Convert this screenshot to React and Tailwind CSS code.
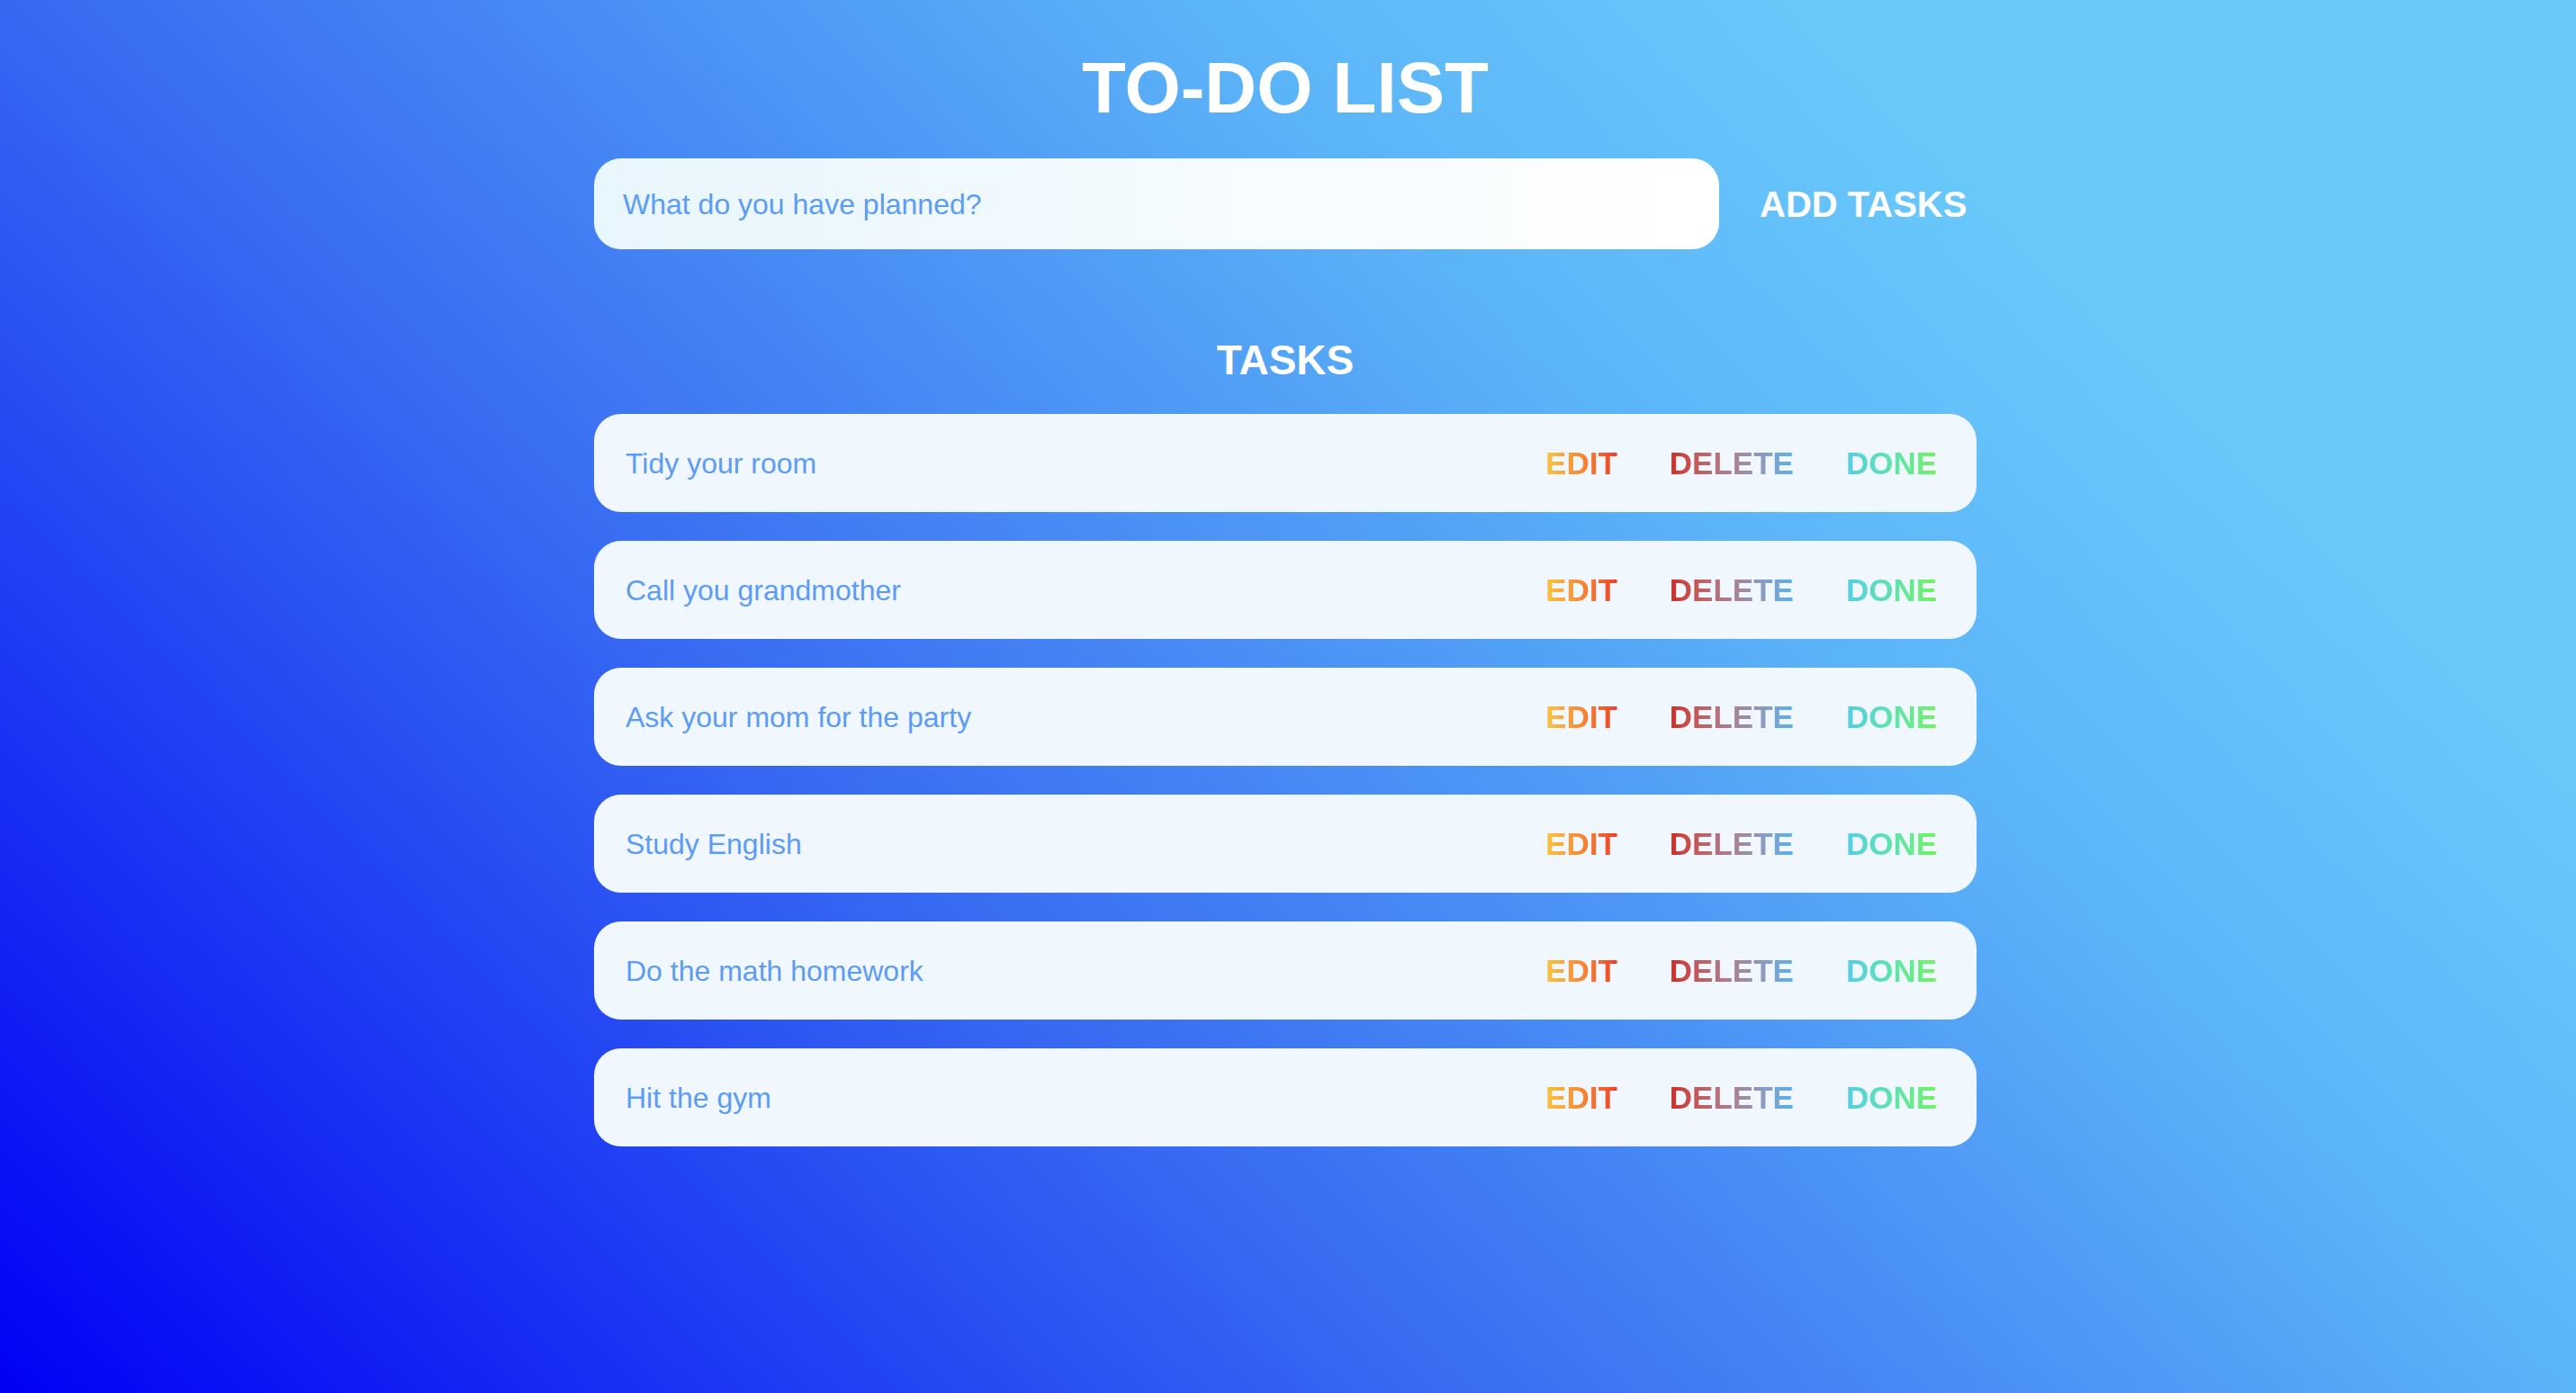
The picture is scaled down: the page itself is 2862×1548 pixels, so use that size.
import React from "react";

const tasks = [
  "Tidy your room",
  "Call you grandmother",
  "Ask your mom for the party",
  "Study English",
  "Do the math homework",
  "Hit the gym",
];

export default function App() {
  return (
    <div
      className="min-h-screen w-full bg-[linear-gradient(45deg,#0000f5_0%,#3668f2_35%,#5cb4f8_65%,#68c8fa_80%,#68c8fa_100%)] font-['Liberation_Sans',Arial,sans-serif]"
    >
      <div className="ml-[660px] flex w-[1536px] flex-col pt-[58px]">
        <h1 className="text-center text-[80px] font-bold leading-none text-white">
          TO-DO LIST
        </h1>
        <div className="mt-[38px] flex items-center">
          <div className="flex h-[101px] w-[1250px] items-center rounded-[30px] bg-linear-to-r from-[#e8f6fd] to-white pl-[32px]">
            <span className="text-[32px] leading-none text-[#5c9cf4]">
              What do you have planned?
            </span>
          </div>
          <button className="ml-[45px] text-[40px] font-bold leading-none text-white">
            ADD TASKS
          </button>
        </div>
        <h2 className="mt-[100px] text-center text-[46px] font-bold leading-none text-white">
          TASKS
        </h2>
        <div className="mt-[37px] flex flex-col gap-[32px]">
          {tasks.map((t) => (
            <div
              key={t}
              className="flex h-[109px] items-center justify-between rounded-[30px] bg-[#f0f7fe] pl-[35px] pr-[44px]"
            >
              <span className="text-[32px] leading-none text-[#5c9cf4]">{t}</span>
              <div className="flex items-center gap-[58px] text-[35px] font-bold leading-none">
                <span className="inline-block bg-linear-to-r from-[#f9c53e] to-[#ee3a28] bg-clip-text text-transparent">
                  EDIT
                </span>
                <span className="inline-block bg-linear-to-r from-[#d02824] to-[#50b2f0] bg-clip-text text-transparent">
                  DELETE
                </span>
                <span className="inline-block bg-linear-to-r from-[#56cde6] to-[#70f45a] bg-clip-text text-transparent">
                  DONE
                </span>
              </div>
            </div>
          ))}
        </div>
      </div>
    </div>
  );
}
